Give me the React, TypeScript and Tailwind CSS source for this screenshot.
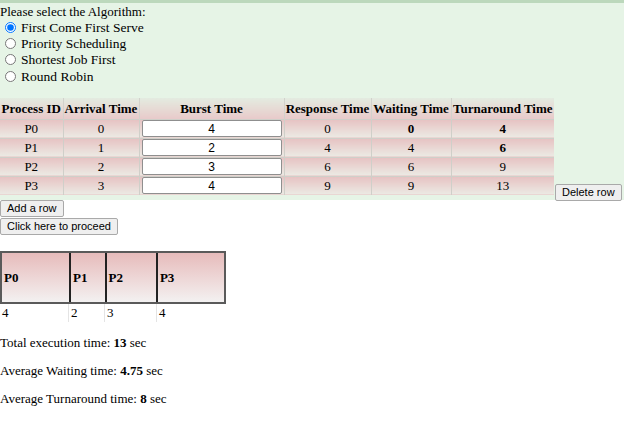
const rows = [
  { id: 'P0', at: 0, bt: 4, rt: 0, wt: 0, tat: 4, boldW: true, boldT: true },
  { id: 'P1', at: 1, bt: 2, rt: 4, wt: 4, tat: 6, boldW: false, boldT: true },
  { id: 'P2', at: 2, bt: 3, rt: 6, wt: 6, tat: 9, boldW: false, boldT: false },
  { id: 'P3', at: 3, bt: 4, rt: 9, wt: 9, tat: 13, boldW: false, boldT: false },
];

const algos = ['First Come First Serve', 'Priority Scheduling', 'Shortest Job First', 'Round Robin'];

const gantt = [
  { id: 'P0', w: 68, t: 4 },
  { id: 'P1', w: 36, t: 2 },
  { id: 'P2', w: 52, t: 3 },
  { id: 'P3', w: 69, t: 4 },
];

const th = 'h-[21px] p-0 text-center font-bold border-r border-[#d2d2cc] bg-gradient-to-b from-[#e3ebe0] to-[#e8caca] whitespace-nowrap';
const td = 'h-[19px] p-0 text-center border-r border-t border-[#cfcfc9] bg-gradient-to-b from-[#e6c2c2] to-[#ebeae4]';
const btn = 'block shrink-0 whitespace-nowrap px-[6px] h-[17px] leading-[15px] text-[11px] bg-[#efefef] border border-[#a9a9a9] rounded-[2px] text-black';

export default function App() {
  return (
    <div className="min-h-[436px] bg-white text-black text-[13px] leading-[15px] font-['Liberation_Serif',serif]">
      <div className="bg-[#e6f4e6] border-t-[3px] border-[#bcd8bc]">
        <div className="pt-[1px]">Please select the Algorithm:</div>
        <div className="flex flex-col pb-[14px]">
          {algos.map((a, i) => (
            <label key={a} className="flex items-center h-[16.3px] pl-[5px]">
              <input type="radio" name="algo" defaultChecked={i === 0} className="w-[11px] h-[11px] m-0 mr-[5px] accent-[#0075ff]" />
              <span className="text-[13.5px]">{a}</span>
            </label>
          ))}
        </div>
        <div className="flex items-end">
          <table className="border-collapse">
            <thead>
              <tr>
                <th className={`${th} w-[63px]`}>Process ID</th>
                <th className={`${th} w-[76px]`}>Arrival Time</th>
                <th className={`${th} w-[144px]`}>Burst Time</th>
                <th className={`${th} w-[87px]`}>Response Time</th>
                <th className={`${th} w-[80px]`}>Waiting Time</th>
                <th className={`${th} w-[103px] border-r-0`}>Turnaround Time</th>
              </tr>
            </thead>
            <tbody>
              {rows.map((r) => (
                <tr key={r.id}>
                  <td className={td}>{r.id}</td>
                  <td className={td}>{r.at}</td>
                  <td className={`${td} px-[2px]`}>
                    <input
                      defaultValue={r.bt}
                      className="block w-[140px] h-[17px] bg-white border border-[#8f8f8f] rounded-[2px] text-center text-[12px] font-['Liberation_Sans',sans-serif] outline-none"
                    />
                  </td>
                  <td className={td}>{r.rt}</td>
                  <td className={`${td} ${r.boldW ? 'font-bold' : ''}`}>{r.wt}</td>
                  <td className={`${td} border-r-0 ${r.boldT ? 'font-bold' : ''}`}>{r.tat}</td>
                </tr>
              ))}
            </tbody>
          </table>
          <button className={`${btn} ml-[1px] mb-[-6px] font-['Liberation_Sans',sans-serif]`}>Delete row</button>
        </div>
        <div className="h-[5px]" />
      </div>
      <div className="font-['Liberation_Sans',sans-serif]">
        <button className={btn}>Add a row</button>
        <button className={`${btn} mt-[1px]`}>Click here to proceed</button>
      </div>
      <div className="mt-[16px] flex border-2 border-[#5a5a5a] w-[226px] h-[53px]">
        {gantt.map((g, i) => (
          <div
            key={g.id}
            style={{ width: g.w }}
            className={`h-full flex items-center pl-[2px] font-bold bg-gradient-to-b from-[#e6bbbb] to-[#f3f1f1] ${i > 0 ? 'border-l-2 border-[#222]' : ''}`}
          >
            {g.id}
          </div>
        ))}
      </div>
      <div className="flex w-[226px] h-[18px]">
        {gantt.map((g, i) => (
          <div
            key={g.id}
            style={{ width: g.w }}
            className={`pl-[2px] pt-[1px] ${i > 0 ? 'border-l border-[#e4e4e4]' : ''}`}
          >
            {g.t}
          </div>
        ))}
      </div>
      <p className="mt-[13px]">Total execution time: <b>13</b> sec</p>
      <p className="mt-[13px]">Average Waiting time: <b>4.75</b> sec</p>
      <p className="mt-[13px]">Average Turnaround time: <b>8</b> sec</p>
    </div>
  );
}
